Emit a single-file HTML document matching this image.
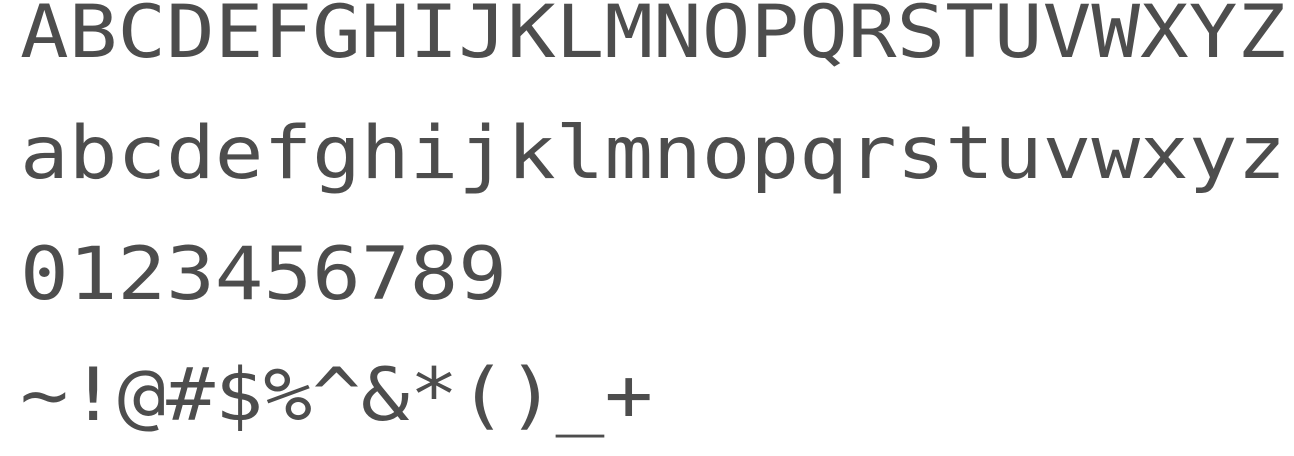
<!DOCTYPE html>
<html><head><meta charset="utf-8"><style>
html,body{margin:0;padding:0;background:#fff;width:1294px;height:453px;overflow:hidden}
.t{position:absolute;left:20px;top:-28px;font-family:"DejaVu Sans Mono","Liberation Mono",monospace;font-size:73px;line-height:121px;color:#4d4d4d;white-space:pre;transform-origin:0 0;transform:scaleX(1.108)}
</style></head><body>
<div class="t">ABCDEFGHIJKLMNOPQRSTUVWXYZ
abcdefghijklmnopqrstuvwxyz
0123456789
~!@#$%^&amp;*()_+</div>
</body></html>
